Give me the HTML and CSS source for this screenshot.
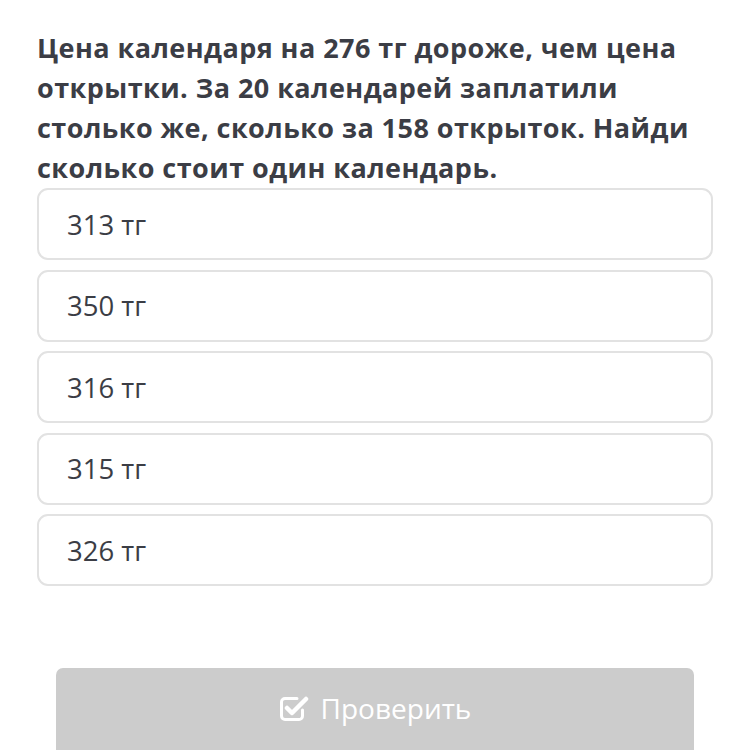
FILE: index.html
```html
<!DOCTYPE html>
<html lang="ru">
<head>
<meta charset="utf-8">
<link rel="stylesheet" href="styles.css">
</head>
<body>
<div class="page">
  <div class="question">Цена календаря на 276 тг дороже, чем цена открытки. За 20 календарей заплатили столько же, сколько за 158 открыток. Найди сколько стоит один календарь.</div>
  <div class="options">
    <div class="option">313 тг</div>
    <div class="option">350 тг</div>
    <div class="option">316 тг</div>
    <div class="option">315 тг</div>
    <div class="option">326 тг</div>
  </div>
  <div class="actions">
    <button class="check-btn">
      <svg class="icon" width="30" height="26" viewBox="0 0 30 26">
        <path d="M18 3.5H6A3.5 3.5 0 0 0 2.5 7v14A3.5 3.5 0 0 0 6 24.5h14a3.5 3.5 0 0 0 3.5-3.5V15" fill="none" stroke="#fff" stroke-width="3" stroke-linecap="round"/>
        <path d="M8 13l5 5L27 4" fill="none" stroke="#fff" stroke-width="4.5" stroke-linecap="round" stroke-linejoin="round"/>
      </svg>
      <span>Проверить</span>
    </button>
  </div>
</div>
</body>
</html>
```
FILE: styles.css
```css
html, body {
  margin: 0;
  padding: 0;
  background: #ffffff;
}
.page {
  padding: 28px 37px 0 37px;
  font-family: "Open Sans", "Noto Sans", sans-serif;
  color: #3b3d45;
}
.question {
  font-size: 27px;
  font-weight: 700;
  line-height: 40px;
  letter-spacing: 0.45px;
}
.options {
  margin-top: 0;
  display: flex;
  flex-direction: column;
  gap: 9.5px;
}
.option {
  box-sizing: border-box;
  height: 72px;
  border: 2px solid #e2e2e2;
  border-radius: 11px;
  display: flex;
  align-items: center;
  padding-left: 28px;
  font-size: 27.5px;
  color: #3b3d45;
}
.actions {
  margin-top: 82px;
  padding: 0 19px;
}
.check-btn {
  width: 100%;
  height: 100px;
  border: none;
  border-radius: 7px;
  background: #cccccc;
  color: #ffffff;
  font-family: "Open Sans", "Noto Sans", sans-serif;
  font-size: 28px;
  display: flex;
  justify-content: center;
  align-items: flex-start;
  padding-top: 21px;
  gap: 12px;
}
.icon {
  margin-top: 6px;
}
```
